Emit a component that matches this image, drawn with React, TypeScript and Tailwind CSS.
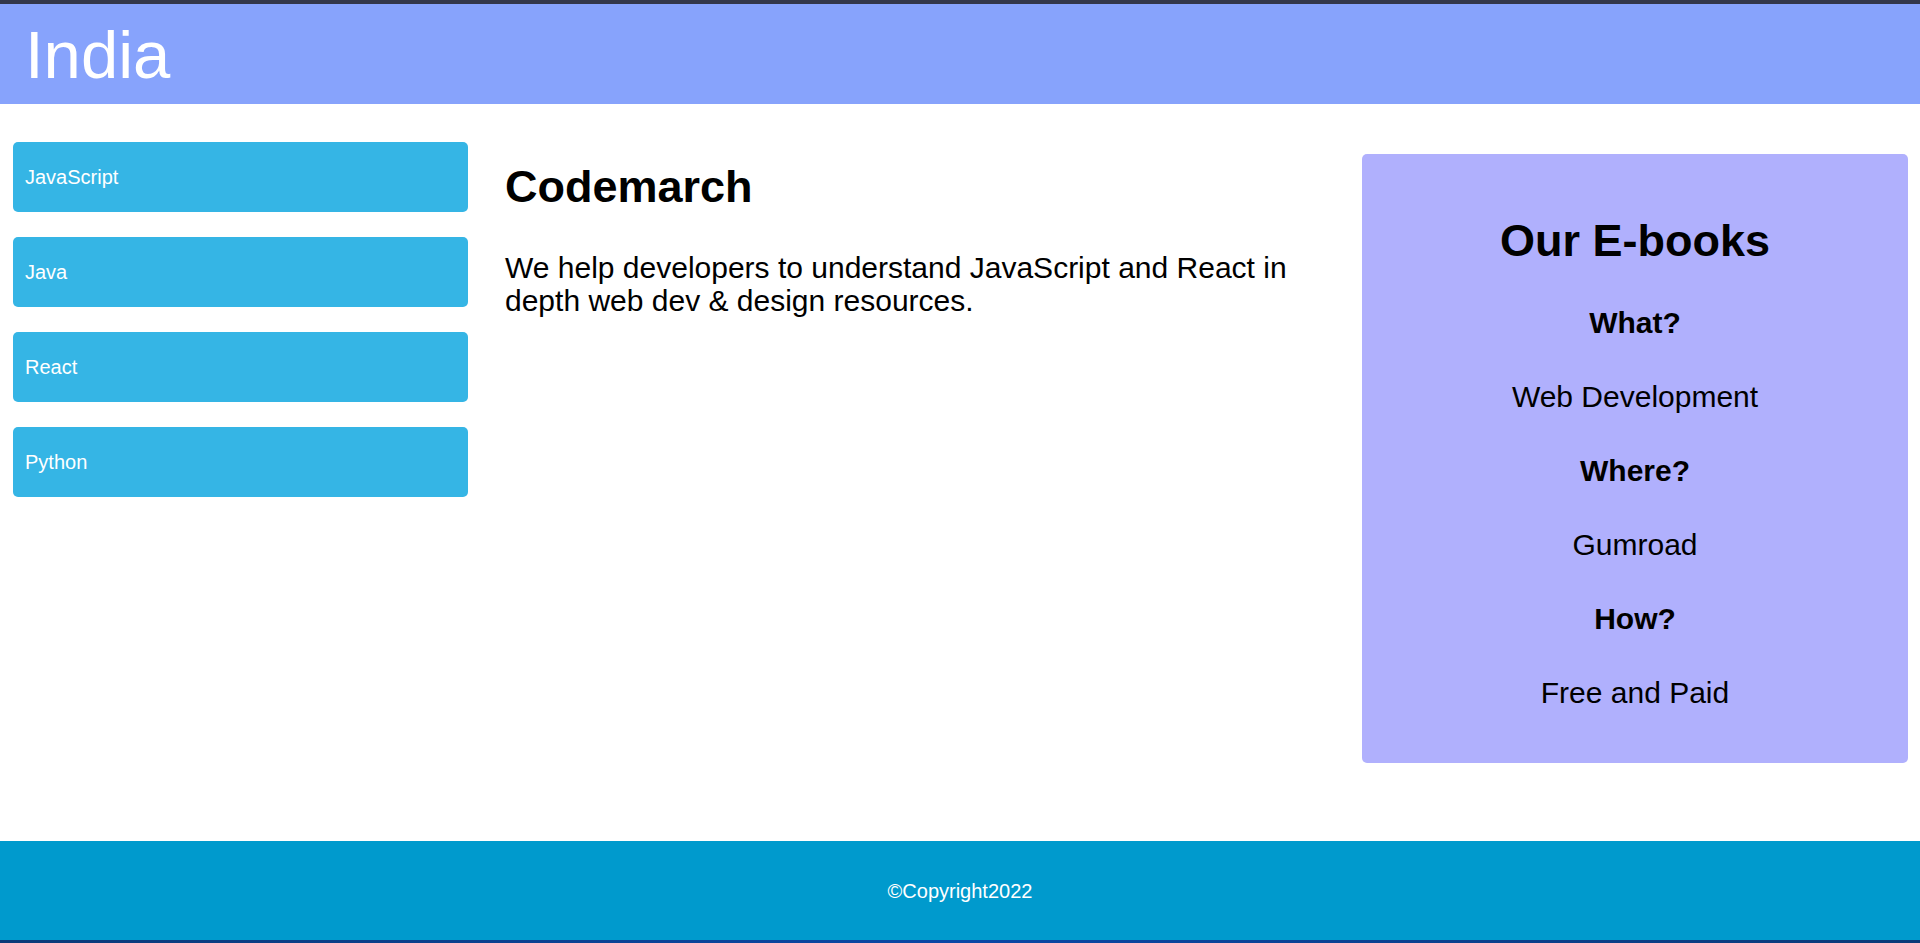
import React from 'react';

const topics = ['JavaScript', 'Java', 'React', 'Python'];

const ebookInfo = [
  { text: 'What?', bold: true },
  { text: 'Web Development', bold: false },
  { text: 'Where?', bold: true },
  { text: 'Gumroad', bold: false },
  { text: 'How?', bold: true },
  { text: 'Free and Paid', bold: false },
];

export default function App() {
  return (
    <div className="flex h-screen flex-col bg-white font-['Liberation_Sans',Arial,sans-serif] text-black">
      <div className="h-[4px] bg-[#33374a]" />

      <header className="flex h-[100px] items-center bg-[#87a3fc] pl-[25px]">
        <h1 className="text-[67px] leading-none text-white">India</h1>
      </header>

      <main className="flex flex-1 items-start">
        <nav className="ml-[13px] mt-[38px] flex w-[455px] flex-col gap-[25px]">
          {topics.map((topic) => (
            <a
              key={topic}
              href="#"
              className="flex h-[70px] items-center rounded-[5px] bg-[#35b5e5] pl-3 text-[20px] text-white"
            >
              {topic}
            </a>
          ))}
        </nav>

        <section className="ml-[37px] mt-[57px] flex-1 pr-[40px]">
          <h2 className="text-[45px] font-bold leading-[52px]">Codemarch</h2>
          <p className="mt-[38px] text-[30px] leading-[33px]">
            We help developers to understand JavaScript and React in depth web dev &amp; design resources.
          </p>
        </section>

        <aside className="mr-[12px] mt-[50px] w-[546px] rounded-[5px] bg-[#b0b0fd] pb-[33px] pt-[61px] text-center">
          <h2 className="text-[45px] font-bold leading-[52px]">Our E-books</h2>
          <div className="mt-[19px]">
            {ebookInfo.map((item) => (
              <p
                key={item.text}
                className={`text-[30px] leading-[74px] ${item.bold ? 'font-bold' : ''}`}
              >
                {item.text}
              </p>
            ))}
          </div>
        </aside>
      </main>

      <footer className="flex h-[99px] items-center justify-center bg-[#009acd] text-[20px] text-white">
        ©Copyright2022
      </footer>
      <div className="h-[3px] bg-gradient-to-r from-[#0b3a78] via-[#0b47a5] to-[#0b3a78]" />
    </div>
  );
}
